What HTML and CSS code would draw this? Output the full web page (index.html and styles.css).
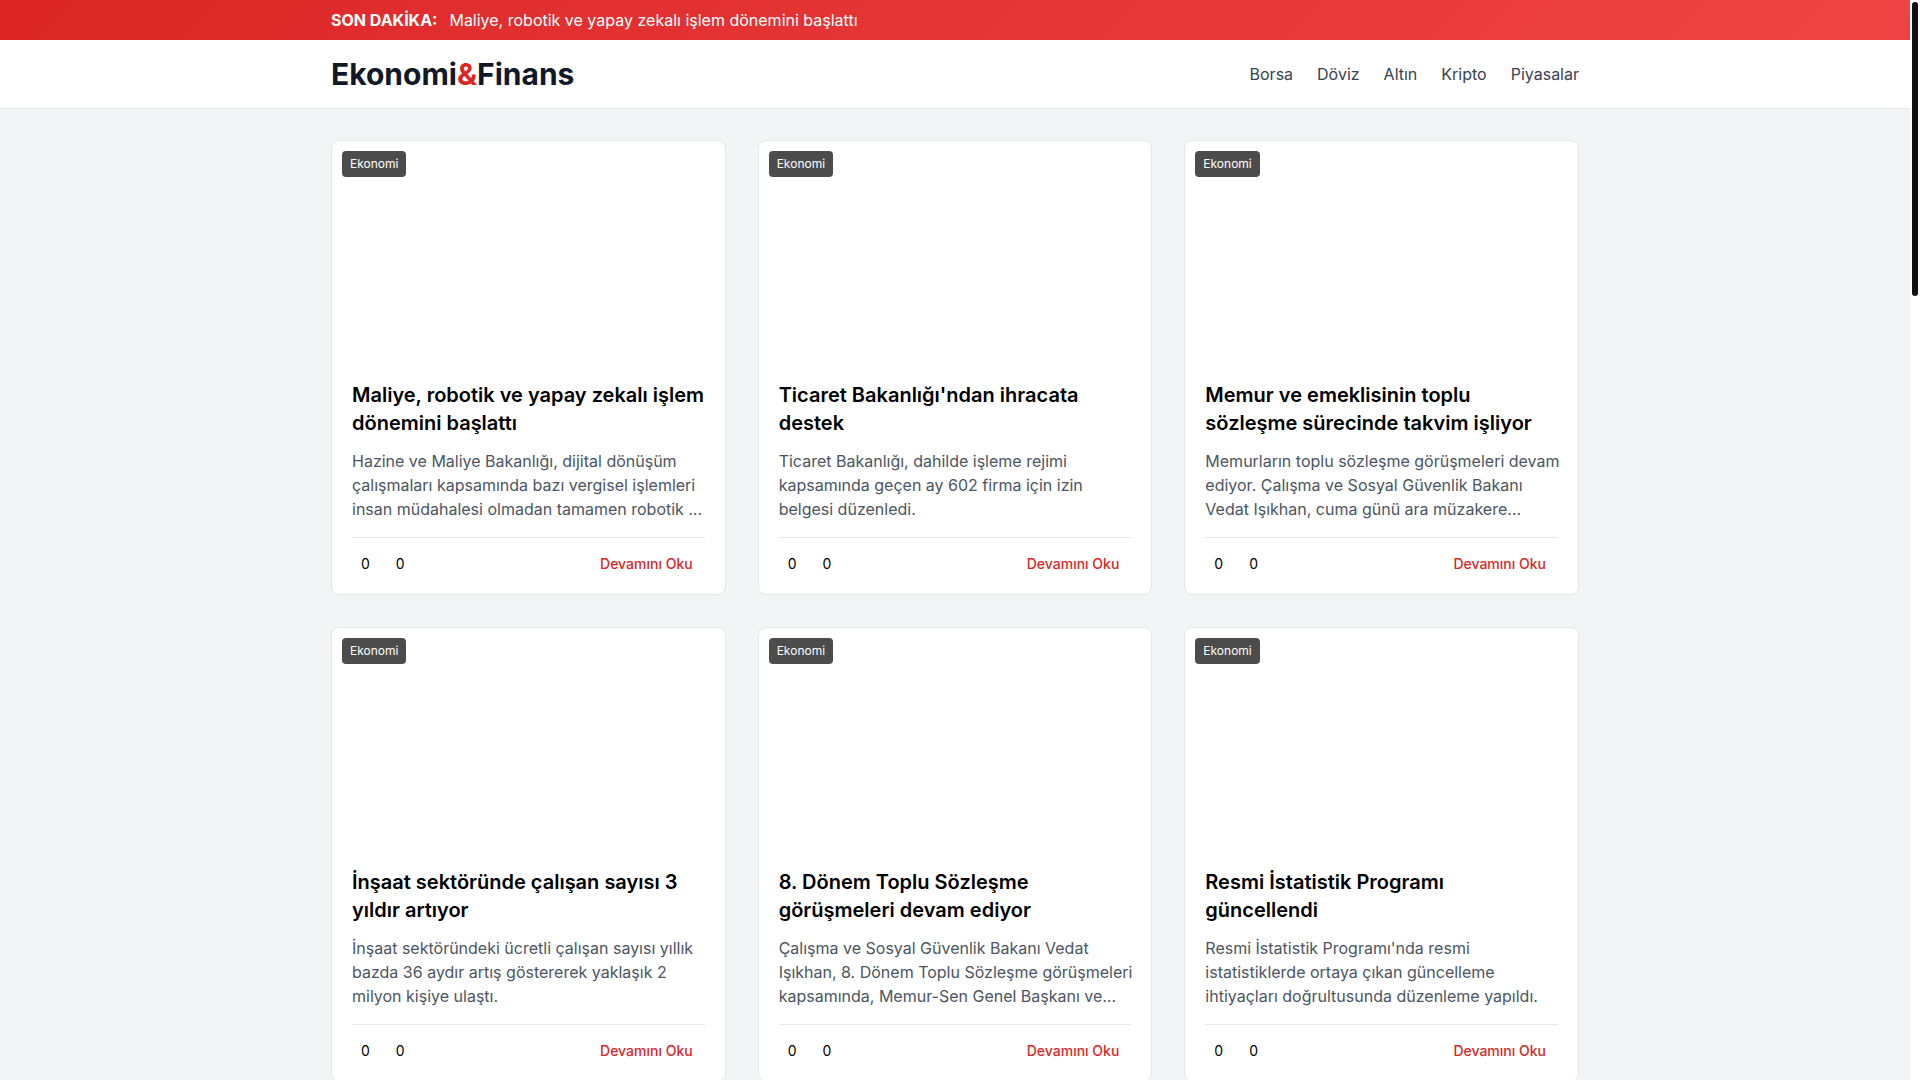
FILE: index.html
```html
<!DOCTYPE html>
<html lang="tr">
<head>
  <meta charset="UTF-8">
  <meta name="viewport" content="width=device-width, initial-scale=1.0">
  <title>Ekonomi&amp;Finans</title>
  <link rel="stylesheet" href="styles.css">
</head>
<body>
  <div class="breaking-news">
    <div class="container breaking-inner">
      <span class="breaking-label">SON DAKİKA:</span>
      <span class="breaking-text">Maliye, robotik ve yapay zekalı işlem dönemini başlattı</span>
    </div>
  </div>

  <header class="header">
    <div class="container header-inner">
      <h1 class="logo">Ekonomi<span>&amp;</span>Finans</h1>
      <nav class="nav">
        <a href="#">Borsa</a>
        <a href="#">Döviz</a>
        <a href="#">Altın</a>
        <a href="#">Kripto</a>
        <a href="#">Piyasalar</a>
      </nav>
    </div>
  </header>

  <main class="container news-grid">
    <article class="card">
      <div class="card-image">
        <span class="category">Ekonomi</span>
      </div>
      <div class="card-content">
        <h2 class="card-title">Maliye, robotik ve yapay zekalı işlem dönemini başlattı</h2>
        <p class="card-text">Hazine ve Maliye Bakanlığı, dijital dönüşüm çalışmaları kapsamında bazı vergisel işlemleri insan müdahalesi olmadan tamamen robotik …</p>
        <div class="card-footer">
          <div class="actions">
            <button class="action" type="button">0</button>
            <button class="action" type="button">0</button>
          </div>
          <a class="read-more" href="#">Devamını Oku</a>
        </div>
      </div>
    </article>

    <article class="card">
      <div class="card-image">
        <span class="category">Ekonomi</span>
      </div>
      <div class="card-content">
        <h2 class="card-title">Ticaret Bakanlığı'ndan ihracata destek</h2>
        <p class="card-text">Ticaret Bakanlığı, dahilde işleme rejimi kapsamında geçen ay 602 firma için izin belgesi düzenledi.</p>
        <div class="card-footer">
          <div class="actions">
            <button class="action" type="button">0</button>
            <button class="action" type="button">0</button>
          </div>
          <a class="read-more" href="#">Devamını Oku</a>
        </div>
      </div>
    </article>

    <article class="card">
      <div class="card-image">
        <span class="category">Ekonomi</span>
      </div>
      <div class="card-content">
        <h2 class="card-title">Memur ve emeklisinin toplu sözleşme sürecinde takvim işliyor</h2>
        <p class="card-text">Memurların toplu sözleşme görüşmeleri devam ediyor. Çalışma ve Sosyal Güvenlik Bakanı Vedat Işıkhan, cuma günü ara müzakere…</p>
        <div class="card-footer">
          <div class="actions">
            <button class="action" type="button">0</button>
            <button class="action" type="button">0</button>
          </div>
          <a class="read-more" href="#">Devamını Oku</a>
        </div>
      </div>
    </article>

    <article class="card">
      <div class="card-image">
        <span class="category">Ekonomi</span>
      </div>
      <div class="card-content">
        <h2 class="card-title">İnşaat sektöründe çalışan sayısı 3 yıldır artıyor</h2>
        <p class="card-text">İnşaat sektöründeki ücretli çalışan sayısı yıllık bazda 36 aydır artış göstererek yaklaşık 2 milyon kişiye ulaştı.</p>
        <div class="card-footer">
          <div class="actions">
            <button class="action" type="button">0</button>
            <button class="action" type="button">0</button>
          </div>
          <a class="read-more" href="#">Devamını Oku</a>
        </div>
      </div>
    </article>

    <article class="card">
      <div class="card-image">
        <span class="category">Ekonomi</span>
      </div>
      <div class="card-content">
        <h2 class="card-title">8. Dönem Toplu Sözleşme görüşmeleri devam ediyor</h2>
        <p class="card-text">Çalışma ve Sosyal Güvenlik Bakanı Vedat Işıkhan, 8. Dönem Toplu Sözleşme görüşmeleri kapsamında, Memur-Sen Genel Başkanı ve…</p>
        <div class="card-footer">
          <div class="actions">
            <button class="action" type="button">0</button>
            <button class="action" type="button">0</button>
          </div>
          <a class="read-more" href="#">Devamını Oku</a>
        </div>
      </div>
    </article>

    <article class="card">
      <div class="card-image">
        <span class="category">Ekonomi</span>
      </div>
      <div class="card-content">
        <h2 class="card-title">Resmi İstatistik Programı güncellendi</h2>
        <p class="card-text">Resmi İstatistik Programı'nda resmi istatistiklerde ortaya çıkan güncelleme ihtiyaçları doğrultusunda düzenleme yapıldı.</p>
        <div class="card-footer">
          <div class="actions">
            <button class="action" type="button">0</button>
            <button class="action" type="button">0</button>
          </div>
          <a class="read-more" href="#">Devamını Oku</a>
        </div>
      </div>
    </article>
  </main>

  <div class="scrollbar" aria-hidden="true">
    <div class="scrollbar-thumb"></div>
  </div>
</body>
</html>
```
FILE: styles.css
```css
* {
  margin: 0;
  padding: 0;
  box-sizing: border-box;
}

body {
  font-family: 'Inter', sans-serif;
  font-size: 16px;
  line-height: 24px;
  background: #f3f4f6;
  color: #000;
  height: 100vh;
  padding-right: 10px;
  overflow: hidden;
}

a {
  text-decoration: none;
}

.container {
  max-width: 1280px;
  margin: 0 auto;
  padding: 0 16px;
}

/* Breaking news */
.breaking-news {
  background: linear-gradient(135deg, #dc2626, #ef4444);
  color: #fff;
  padding: 8px 0;
}

.breaking-inner {
  display: flex;
  gap: 12px;
}

.breaking-label {
  font-weight: 700;
}

/* Header */
.header {
  background: #fff;
  box-shadow: 0 1px 0 #e5e7eb;
  padding: 16px 0;
}

.header-inner {
  display: flex;
  justify-content: space-between;
  align-items: center;
}

.logo {
  font-size: 30px;
  line-height: 36px;
  font-weight: 700;
  color: #111827;
}

.logo span {
  color: #dc2626;
}

.nav {
  display: flex;
  gap: 24px;
}

.nav a {
  color: #374151;
}

.nav a:hover {
  color: #dc2626;
}

/* News cards */
.news-grid {
  display: grid;
  grid-template-columns: repeat(3, 1fr);
  gap: 32px;
  padding-top: 32px;
  padding-bottom: 32px;
}

.card {
  background: #fff;
  border: 1px solid #e5e7eb;
  border-radius: 8px;
  overflow: hidden;
}

.card-image {
  position: relative;
  height: 220px;
}

.category {
  position: absolute;
  top: 10px;
  left: 10px;
  padding: 4px 8px;
  border-radius: 4px;
  background: rgba(0, 0, 0, 0.7);
  color: #fff;
  font-size: 12px;
  line-height: 18px;
}

.card-content {
  padding: 20px;
}

.card-title {
  font-size: 20px;
  line-height: 28px;
  font-weight: 600;
  margin-bottom: 12px;
}

.card-text {
  color: #4b5563;
  margin-bottom: 16px;
  margin-right: -8px;
}

.card-footer {
  display: flex;
  justify-content: space-between;
  align-items: center;
  padding-top: 16px;
  border-top: 1px solid #e5e7eb;
  font-size: 14px;
  line-height: 20px;
}

.actions {
  display: flex;
  gap: 8px;
}

.action {
  border: none;
  background: none;
  padding: 0 9px;
  font: inherit;
  color: inherit;
  cursor: pointer;
}

.read-more {
  padding: 0 12px;
  color: #dc2626;
  font-weight: 500;
}

/* Scrollbar */
.scrollbar {
  position: fixed;
  top: 0;
  right: 0;
  bottom: 0;
  width: 10px;
  padding: 2px;
  background: #fff;
}

.scrollbar-thumb {
  height: 294px;
  border-radius: 3px;
  background: #111;
}
```
